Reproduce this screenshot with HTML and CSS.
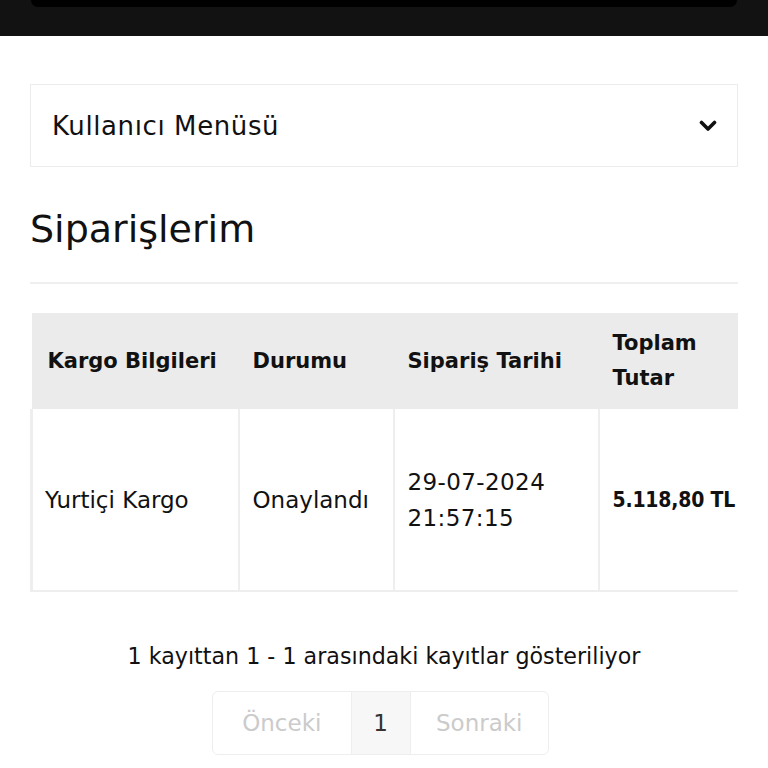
FILE: index.html
```html
<!DOCTYPE html>
<html lang="tr">
<head>
<meta charset="utf-8">
<link rel="stylesheet" href="styles.css">
</head>
<body>
<header class="topbar"><div class="topbar-inner"></div></header>
<main class="content">
  <div class="menu-box">
    <span class="menu-label">Kullanıcı Menüsü</span>
    <svg class="chevron" width="18" height="12" viewBox="0 0 18 12"><path d="M2.5 2.5 L9 9 L15.5 2.5" fill="none" stroke="#111" stroke-width="3.6" stroke-linecap="round" stroke-linejoin="round"/></svg>
  </div>
  <h1 class="title">Siparişlerim</h1>
  <hr class="divider">
  <div class="table-wrap">
    <table class="orders">
      <thead>
        <tr>
          <th class="c1">Kargo Bilgileri</th>
          <th class="c2">Durumu</th>
          <th class="c3">Sipariş Tarihi</th>
          <th class="c4">Toplam<br>Tutar</th>
        </tr>
      </thead>
      <tbody>
        <tr>
          <td>Yurtiçi Kargo</td>
          <td>Onaylandı</td>
          <td class="date">29-07-2024<br>21:57:15</td>
          <td class="total">5.118,80 TL</td>
        </tr>
      </tbody>
    </table>
  </div>
  <p class="info">1 kayıttan 1 - 1 arasındaki kayıtlar gösteriliyor</p>
  <nav class="pager">
    <span class="pg disabled">Önceki</span>
    <span class="pg current">1</span>
    <span class="pg disabled">Sonraki</span>
  </nav>
</main>
</body>
</html>
```
FILE: styles.css
```css
* { box-sizing: border-box; }
html, body { margin: 0; padding: 0; background: #fff; }
body {
  font-family: "DejaVu Sans", "Open Sans", sans-serif;
  color: #111;
}
.topbar {
  height: 36px;
  background: #121212;
  padding: 0 31px;
}
.topbar-inner {
  height: 7px;
  background: #000;
  border-radius: 0 0 8px 8px;
}
.content {
  padding: 48px 30px 0 30px;
}
.menu-box {
  height: 83px;
  border: 1.5px solid #ececec;
  display: flex;
  align-items: center;
  justify-content: space-between;
  padding: 0 20px 0 21px;
}
.menu-label {
  font-size: 26px;
  letter-spacing: 0.6px;
  color: #111;
}
.chevron { display: block; }
.title {
  margin: 38px 0 0 0;
  font-size: 38px;
  font-weight: 400;
  line-height: 48px;
  color: #111;
}
.divider {
  margin: 29px 0 0 0;
  border: 0;
  border-top: 2px solid #efefef;
}
.table-wrap {
  margin-top: 29px;
  width: 708px;
  overflow: hidden;
}
.orders {
  border-collapse: collapse;
  table-layout: fixed;
  width: 740px;
}
.orders th {
  background: #ebebeb;
  height: 96px;
  text-align: left;
  font-size: 21px;
  font-weight: 700;
  line-height: 35px;
  padding: 0 14px;
  color: #111;
}
.orders th.c1 { padding-left: 16px; }
.c1 { width: 207px; }
.c2 { width: 155px; }
.c3 { width: 205px; }
.c4 { width: 173px; }
.orders td {
  height: 182px;
  font-size: 23px;
  line-height: 36px;
  padding: 0 12px 0 13px;
  border-left: 2px solid #eeeeee;
  border-bottom: 2px solid #eeeeee;
  color: #111;
  vertical-align: middle;
  white-space: nowrap;
}
.orders td:first-child { padding-left: 12px; border-left-width: 3px; }
.orders td.date { letter-spacing: 0.4px; }
.orders td.total {
  font-family: "DejaVu Sans Condensed", "DejaVu Sans", sans-serif;
  font-weight: 700;
  font-size: 21px;
  letter-spacing: -0.2px;
}
.info {
  margin: 44px 0 0 0;
  text-align: center;
  font-size: 22.2px;
  line-height: 40px;
  color: #111;
}
.pager {
  margin: 15px 0 0 182px;
  width: 337px;
  height: 64px;
  display: flex;
  border: 1.5px solid #eeeeee;
  border-radius: 6px;
  overflow: hidden;
}
.pg {
  display: flex;
  align-items: center;
  justify-content: center;
  font-size: 23px;
}
.pg.disabled { color: #cbcbcb; flex: 1; }
.pg.current {
  width: 60px;
  background: #f7f7f7;
  border-left: 1.5px solid #eeeeee;
  border-right: 1.5px solid #eeeeee;
  color: #333;
}
```
